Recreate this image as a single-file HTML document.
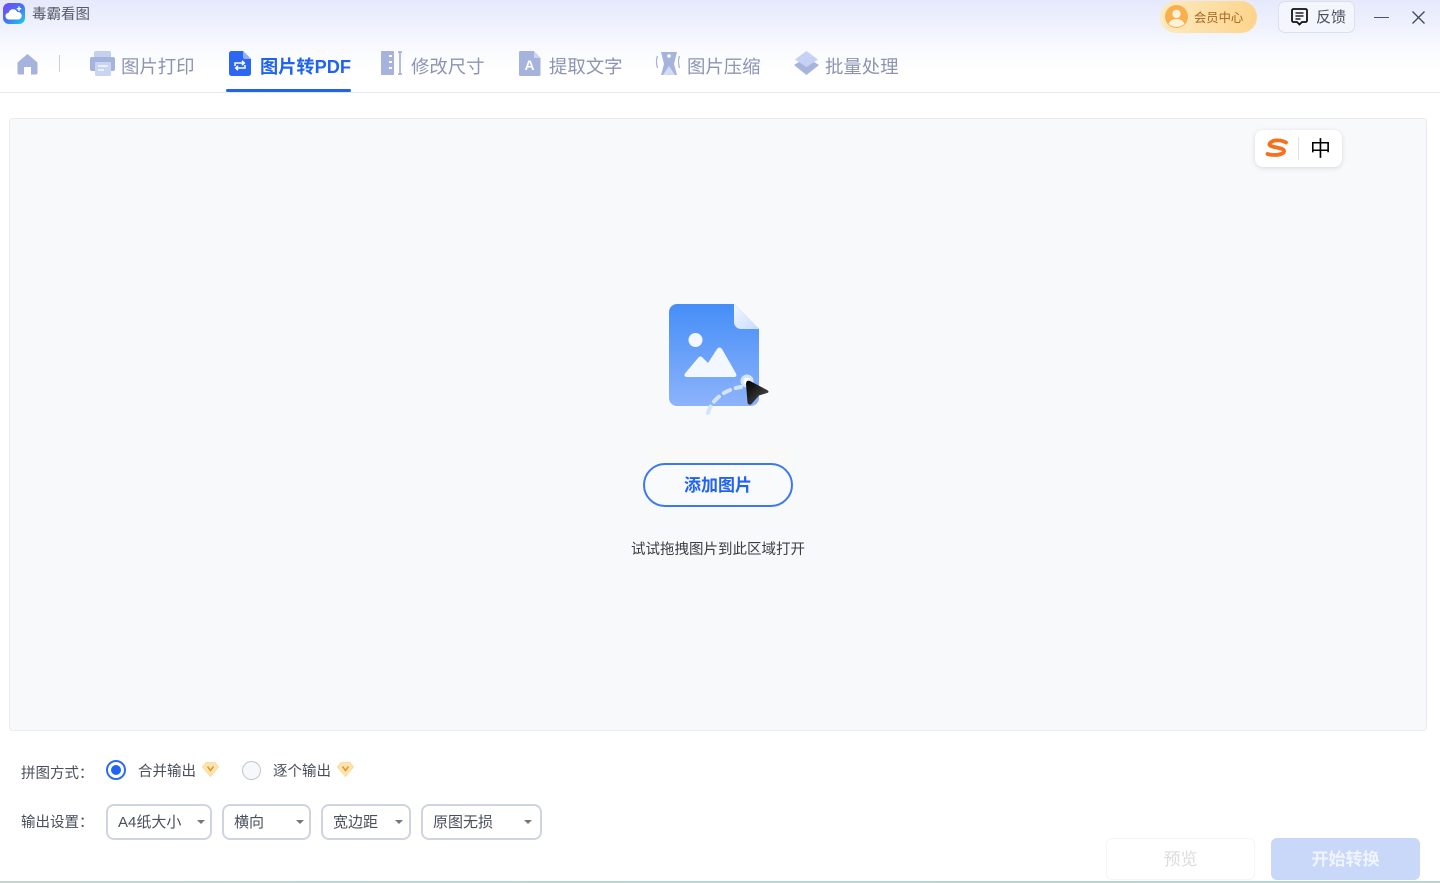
<!DOCTYPE html>
<html lang="zh"><head><meta charset="utf-8"><title>毒霸看图</title>
<style>
*{box-sizing:border-box}
html,body{margin:0;padding:0}
body{width:1440px;height:883px;overflow:hidden;background:#fff;position:relative;font-family:"Liberation Sans","Noto Sans CJK SC",sans-serif;color:#333}
.a{position:absolute;white-space:nowrap}
.hdr{left:0;top:0;width:1440px;height:93px;background:linear-gradient(180deg,#e5e9fc 0,#eef1fd 25px,#f8fafe 48px,#fff 72px);border-bottom:1px solid #e3e9f2}
.tab{font-size:18.4px;line-height:26px;color:#8c94b4;top:54px}
.tabact{color:#1f63f0;font-weight:700;font-size:18.2px}
.main{left:9px;top:118px;width:1418px;height:613px;background:#f8f9fb;border:1px solid #e8ebf0;border-radius:4px}
.lbl{font-size:14.5px;line-height:20px;color:#4a4f5c}
.sel{top:804px;height:36px;background:#fff;border:2px solid #d0d4e2;border-radius:8px;font-size:15px;line-height:34px;color:#4a4f5c;padding-left:10px}
.sel i{position:absolute;top:14px;width:0;height:0;border:4px solid transparent;border-top:4px solid #777;border-bottom:0}
svg{position:absolute;display:block;overflow:visible}
</style></head><body>
<div class="a hdr"></div>

<svg style="left:3px;top:3px" width="22" height="21" viewBox="0 0 22 21"><defs><linearGradient id="lg" x1="0" y1="0" x2="1" y2="1"><stop offset="0" stop-color="#7a45f0"/><stop offset=".55" stop-color="#3d7bf5"/><stop offset="1" stop-color="#1fd0f0"/></linearGradient></defs><rect width="22" height="21" rx="6" fill="url(#lg)"/><path d="M6 16.5a3.4 3.4 0 0 1-.3-6.8 4.6 4.6 0 0 1 8.7-.6 3.7 3.7 0 0 1 1.2 7.4z" fill="#fff"/><path d="M16 3.500v4.500M13.800 5.700h4.400" stroke="#fff" stroke-width="1.400"/></svg>
<div class="a" style="left:32px;top:5px;font-size:14.500px;line-height:20px;color:#555a66">毒霸看图</div>

<svg style="left:17px;top:53px" width="21" height="22" viewBox="0 0 21 22"><path d="M10.500 1 20.500 9.500V20a1.500 1.500 0 0 1-1.500 1.500h-5V14H7v7.500H2A1.500 1.500 0 0 1 .5 20V9.500z" fill="#a6b3dc"/></svg>
<div class="a" style="left:59px;top:55px;width:1px;height:17px;background:#c9cfdf"></div>

<svg style="left:90px;top:51px" width="25" height="25" viewBox="0 0 25 25"><rect x="4" y="0" width="17" height="8" rx="2" fill="#c5d0f0"/><rect x="0" y="6" width="25" height="14" rx="2" fill="#a6b3dc"/><rect x="5" y="11" width="16" height="14" rx="1.500" fill="#c9d4f3"/><path d="M8 15h10M8 19h6" stroke="#fff" stroke-width="1.300"/></svg>
<div class="a tab" style="left:121px">图片打印</div>

<svg style="left:229px;top:51px" width="22" height="25" viewBox="0 0 22 25"><path d="M2.500 0H14l8 8v14.500a2.500 2.500 0 0 1-2.500 2.500h-17A2.500 2.500 0 0 1 0 22.500v-20A2.500 2.500 0 0 1 2.500 0z" fill="#2b67f0"/><path d="M14 0l8 8h-6a2 2 0 0 1-2-2z" fill="#8fb2fa"/><path d="M6 15v-3h9M13 9.800l2.300 2.200-2.300 2.200M16 14v3H7M9 14.800l-2.300 2.200L9 19.200" fill="none" stroke="#fff" stroke-width="1.500"/></svg>
<div class="a tab tabact" style="left:260px">图片转PDF</div>
<div class="a" style="left:226px;top:89px;width:125px;height:3px;background:#1f63f0;border-radius:2px"></div>

<svg style="left:381px;top:51px" width="22" height="25" viewBox="0 0 22 25"><rect width="13" height="24" rx="1" fill="#a6b3dc"/><path d="M8 5h3M8 11h3M8 17h3" stroke="#fff" stroke-width="2"/><path d="M17 1h4M17 23h4M19 1v22" stroke="#a6b3dc" stroke-width="1.700"/></svg>
<div class="a tab" style="left:411px">修改尺寸</div>

<svg style="left:519px;top:51px" width="22" height="25" viewBox="0 0 22 25"><path d="M1.500 0H15l6.500 7v16.500a1.500 1.500 0 0 1-1.500 1.500H1.500A1.500 1.500 0 0 1 0 23.500v-22A1.500 1.500 0 0 1 1.500 0z" fill="#a6b3dc"/><path d="M15 0l6.500 7H15z" fill="#c9d4f3"/><text x="10.500" y="19" font-size="14" font-weight="700" fill="#fff" text-anchor="middle" font-family="Liberation Sans">A</text></svg>
<div class="a tab" style="left:549px">提取文字</div>

<svg style="left:656px;top:51px" width="25" height="25" viewBox="0 0 25 25"><path d="M5 1h16l-3 12 3 11H5l3-11z" fill="#a6b3dc"/><circle cx="13" cy="5" r="1.800" fill="#fff"/><path d="M7 24l6-9 6 9z" fill="#d3dcf5"/><path d="M1.500 5c-1.500 4-1.500 7 0 12M23.500 5c-1.500 4-1.500 7 0 12" fill="none" stroke="#a6b3dc" stroke-width="1.300"/></svg>
<div class="a tab" style="left:687px">图片压缩</div>

<svg style="left:794px;top:51px" width="25" height="25" viewBox="0 0 25 25"><path d="M0 14l5-3 7.500 4 7.500-4 5 3-12.500 10z" fill="#a6b3dc"/><path d="M12.500 0 24 8.500 12.500 16 1 8.500z" fill="#c6d1f3"/></svg>
<div class="a tab" style="left:825px">批量处理</div>

<!-- top right -->
<div class="a" style="left:1160px;top:1px;width:97px;height:32px;border-radius:16px;background:linear-gradient(90deg,#fdeac0,#fdd48c)"></div>
<svg style="left:1165px;top:5px" width="23" height="23" viewBox="0 0 22 22"><circle cx="11" cy="11" r="11" fill="#f8b04e"/><circle cx="11" cy="8.500" r="4" fill="#fff2da"/><path d="M3.500 18c1.500-3.500 4-4.500 7.500-4.500s6 1 7.500 4.500a11 11 0 0 1-15 0z" fill="#fff2da"/></svg>
<div class="a" style="left:1194px;top:9px;font-size:12.300px;line-height:18px;color:#a8651d">会员中心</div>
<div class="a" style="left:1278px;top:1px;width:77px;height:32px;border:1px solid #dbe0ea;border-radius:7px;background:#f3f6fc"></div>
<svg style="left:1291px;top:8px" width="17" height="18" viewBox="0 0 17 18"><path d="M2.500 1h12A1.500 1.500 0 0 1 16 2.500v10a1.500 1.500 0 0 1-1.500 1.500H11l-2.500 2.500L6 14H2.500A1.500 1.500 0 0 1 1 12.500v-10A1.500 1.500 0 0 1 2.500 1z" fill="none" stroke="#111" stroke-width="1.800"/><path d="M4.500 5h8M4.500 8h8M4.500 11h5" stroke="#222" stroke-width="1.400"/></svg>
<div class="a" style="left:1316px;top:8px;font-size:15px;line-height:20px;color:#4a4f5c">反馈</div>
<div class="a" style="left:1374px;top:17px;width:15px;height:1px;background:#4a5268"></div>
<svg style="left:1412px;top:11px" width="13" height="13" viewBox="0 0 13 13"><path d="M.5.500l12 12M12.500.500l-12 12" stroke="#3f4860" stroke-width="1.300"/></svg>

<div class="a main"></div>

<div class="a" style="left:1255px;top:130px;width:87px;height:37px;background:#fff;border-radius:8px;box-shadow:0 1px 5px rgba(60,70,100,.18)"></div>
<svg style="left:1266px;top:139px" width="22" height="19" viewBox="0 0 22 19"><path d="M20 3.500C14 0 5 1 3.500 5c-1.200 3.500 13 3 14.500 6.500C19 16 8 17 1.500 15" fill="none" stroke="#f4721e" stroke-width="3.800" stroke-linecap="round"/></svg>
<div class="a" style="left:1298px;top:137px;width:1px;height:23px;background:#dde0e5"></div>
<div class="a" style="left:1310px;top:138px;font-size:21px;line-height:24px;color:#000">中</div>

<!-- file illustration -->
<svg style="left:669px;top:304px" width="100" height="113" viewBox="0 0 100 113"><defs><linearGradient id="fg" x1="0" y1="0" x2="0" y2="1"><stop offset="0" stop-color="#458ef8"/><stop offset="1" stop-color="#8db3fb"/></linearGradient><linearGradient id="cg" x1="0" y1="0" x2="1" y2="1"><stop offset="0" stop-color="#f4f8ff"/><stop offset="1" stop-color="#c6dafd"/></linearGradient><linearGradient id="ar" x1="0" y1="0" x2="1" y2="1"><stop offset="0" stop-color="#000"/><stop offset="1" stop-color="#555"/></linearGradient></defs>
<path d="M8 0H65L90 25V94a8 8 0 0 1-8 8H8a8 8 0 0 1-8-8V8a8 8 0 0 1 8-8z" fill="url(#fg)"/>
<path d="M65 0 90 25H72a7 7 0 0 1-7-7z" fill="url(#cg)"/>
<circle cx="26.500" cy="36" r="7" fill="#f3f7ff"/>
<path d="M19 73c-3 0-4.500-1-3-3.500L29 54c1.500-2 3.500-2 5 0l5 5 9-14c1.500-2 3.500-2 5 0l14 24.500c1 2.500 0 3.500-2 3.500z" fill="#f3f7ff"/>
<path d="M42 92C44 84 50 77 58 72c6-3.500 11-5 17-6" fill="none" stroke="#d4e3fe" stroke-width="4" stroke-linecap="round" stroke-dasharray="7 6" transform="translate(-3 17)"/>
<circle cx="78" cy="77" r="6.500" fill="#d6e5ff"/><circle cx="78" cy="77" r="3.500" fill="#fff"/>
<path d="M77 80c0-3 2-4 4-3l17 9c2 1 2 2.500 0 3l-8 2.500-7 8c-1.500 2-4 1.500-4.500-1z" fill="url(#ar)"/>
</svg>

<div class="a" style="left:652px;top:446px;width:138px;height:35px;background:#f9f9f7"></div>
<div class="a" style="left:643px;top:463px;width:150px;height:44px;border:2px solid #3d78ee;border-radius:22px;background:#f9fafc;text-align:center;font-size:17px;font-weight:700;line-height:42px;color:#1f63f0">添加图片</div>
<div class="a" style="left:631px;top:540px;font-size:14.500px;line-height:20px;color:#3b3d44">试试拖拽图片到此区域打开</div>

<!-- bottom -->
<div class="a lbl" style="left:21px;top:764px">拼图方式：</div>
<div class="a" style="left:106px;top:760px;width:20px;height:20px;border:2px solid #2d6cf2;border-radius:50%;background:#fff"></div>
<div class="a" style="left:111px;top:765px;width:10px;height:10px;border-radius:50%;background:#1f63f0"></div>
<div class="a lbl" style="left:138px;top:762px">合并输出</div>
<svg style="left:202px;top:762px" width="17" height="15" viewBox="0 0 17 15"><path d="M4 .5h9L16.500 5 8.500 14.500.5 5z" fill="#fde4ae" stroke="#fbdc9c"/><path d="M5.500 4.500 8.500 8.500l3-4" fill="none" stroke="#e0962c" stroke-width="1.500"/></svg>
<div class="a" style="left:242px;top:761px;width:19px;height:19px;border:1.500px solid #c2c6cf;border-radius:50%;background:#f6f8fc"></div>
<div class="a lbl" style="left:273px;top:762px">逐个输出</div>
<svg style="left:337px;top:762px" width="17" height="15" viewBox="0 0 17 15"><path d="M4 .5h9L16.500 5 8.500 14.500.5 5z" fill="#fde4ae" stroke="#fbdc9c"/><path d="M5.500 4.500 8.500 8.500l3-4" fill="none" stroke="#e0962c" stroke-width="1.500"/></svg>

<div class="a lbl" style="left:21px;top:813px">输出设置：</div>
<div class="a sel" style="left:106px;width:106px">A4纸大小<i style="left:89px"></i></div>
<div class="a sel" style="left:222px;width:89px">横向<i style="left:72px"></i></div>
<div class="a sel" style="left:321px;width:90px">宽边距<i style="left:72px"></i></div>
<div class="a sel" style="left:421px;width:121px">原图无损<i style="left:101px"></i></div>

<div class="a" style="left:1106px;top:838px;width:149px;height:42px;border:1px solid #f5f5f6;border-radius:6px;background:#fff;text-align:center;font-size:17px;line-height:42px;color:#dcdcdc">预览</div>
<div class="a" style="left:1271px;top:838px;width:149px;height:42px;border-radius:6px;background:#c9d8f9;text-align:center;font-size:17px;font-weight:700;line-height:44px;color:#f0f4fe">开始转换</div>

<div class="a" style="left:0;top:881px;width:1440px;height:2px;background:linear-gradient(90deg,#c2d5cc,#b5d6d2 50%,#b8d4cc)"></div>
</body></html>
